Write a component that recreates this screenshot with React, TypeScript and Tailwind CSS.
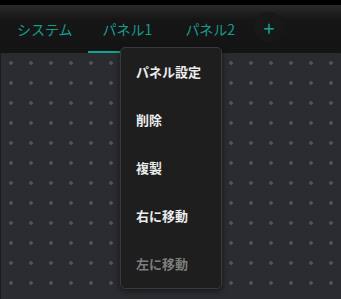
const tabs = ["システム", "パネル1", "パネル2"]
const items = ["パネル設定", "削除", "複製", "右に移動", "左に移動"]

export default function App() {
  return (
    <div
      className="relative flex h-[299px] w-[341px] flex-col overflow-hidden bg-[#141414]"
      style={{ fontFamily: '"Noto Sans CJK JP", "Noto Sans", sans-serif' }}
    >
      <div className="h-[5px] bg-black" />
      <div className="flex h-[48px] items-end bg-gradient-to-b from-[#2b2b2b] via-[#161616] via-30% to-[#141414] pl-[2px]">
        {tabs.map((t, i) => (
          <div
            key={t}
            className={`flex h-[48px] items-center border-b-2 px-[15px] pt-[2px] text-[14px] text-[#139d8f] ${
              i === 1 ? "border-[#14a393]" : "border-transparent"
            } ${i === 2 ? "ml-[3px]" : ""}`}
          >
            {t}
          </div>
        ))}
        <div className="mb-[4px] ml-[4px] flex h-[30px] w-[30px] items-center justify-center self-center rounded-full bg-[#181818] pt-[2px] text-[20px] leading-none text-[#14a393]">
          +
        </div>
      </div>
      <div className="flex-1 border-l border-[#1c1c1e] bg-[#2b2c30] bg-[radial-gradient(circle,#4f5055_1.6px,transparent_1.9px)] bg-[length:20px_20px]" />

      <div className="absolute left-[120px] top-[47px] flex w-[102px] flex-col rounded-[5px] border border-[#3a3a3c] bg-[#1e1e1e] shadow-[0_2px_6px_rgba(0,0,0,0.5)]">
        {items.map((t, i) => (
          <div
            key={t}
            className={`flex h-[48px] items-center pl-[15px] text-[13px] font-semibold ${
              i === 4 ? "text-[#7d7d7d]" : "text-[#ececec]"
            }`}
          >
            {t}
          </div>
        ))}
      </div>
    </div>
  )
}
